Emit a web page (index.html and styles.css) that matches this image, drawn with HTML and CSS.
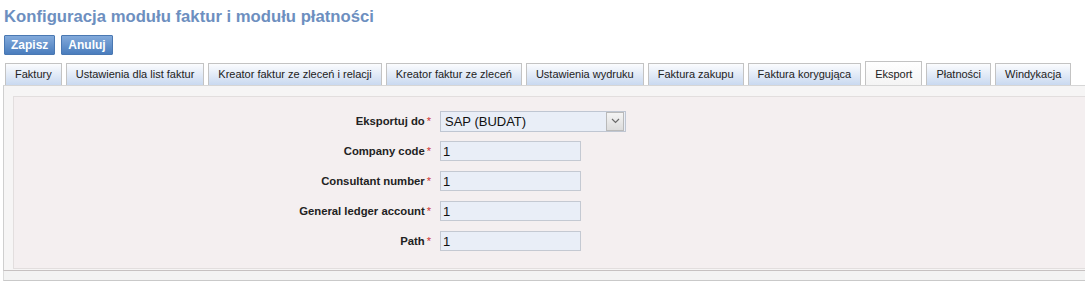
FILE: index.html
```html
<!DOCTYPE html>
<html lang="pl">

<head>
    <meta charset="UTF-8" />
    <title>Konfiguracja modułu faktur</title>
    <link rel="stylesheet" href="styles.css">
</head>

<body>
    <h1 class="title">Konfiguracja modułu faktur i modułu płatności</h1>
    <div class="toolbar">
        <button class="btn">Zapisz</button>
        <button class="btn">Anuluj</button>
    </div>
    <div class="tabs">
        <ul class="tab-list">
            <li class="tab">Faktury</li>
            <li class="tab">Ustawienia dla list faktur</li>
            <li class="tab">Kreator faktur ze zleceń i relacji</li>
            <li class="tab">Kreator faktur ze zleceń</li>
            <li class="tab">Ustawienia wydruku</li>
            <li class="tab">Faktura zakupu</li>
            <li class="tab">Faktura korygująca</li>
            <li class="tab active">Eksport</li>
            <li class="tab">Płatności</li>
            <li class="tab">Windykacja</li>
        </ul>
        <div class="tab-panel">
            <!-- formularz eksportu -->
            <div class="form-box">
                <div class="row">
                    <label>Eksportuj do<span class="req">*</span></label>
                    <div class="select">
                        <span>SAP (BUDAT)</span>
                        <span class="arrow">
                            <svg width="9" height="6" viewBox="0 0 9 6"><path d="M1 1 L4.5 4.5 L8 1" fill="none" stroke="#6a6a6a" stroke-width="1.2"/></svg>
                        </span>
                    </div>
                </div>
                <div class="row">
                    <label>Company code<span class="req">*</span></label>
                    <input type="text" value="1" />
                </div>
                <div class="row">
                    <label>Consultant number<span class="req">*</span></label>
                    <input type="text" value="1" />
                </div>
                <div class="row">
                    <label>General ledger account<span class="req">*</span></label>
                    <input type="text" value="1" />
                </div>
                <div class="row">
                    <label>Path<span class="req">*</span></label>
                    <input type="text" value="1" />
                </div>
            </div>
        </div>
        <div class="tab-footer"></div>
    </div>
</body>

</html>
```

FILE: styles.css
```css
body {
    margin: 0;
    padding: 0;
    background-color: #fff;
    font-family: "Liberation Sans", Arial, sans-serif;
    overflow: hidden;
}

.title {
    margin: 0;
    padding: 7px 0 0 4px;
    height: 24px;
    font-size: 16.7px;
    font-weight: bold;
    color: #6d8fc0;
}

.toolbar {
    display: flex;
    gap: 6px;
    padding: 4px 0 0 4px;
    height: 20px;
}

.btn {
    height: 20px;
    padding: 0 6px;
    border: 1px solid #4a78b2;
    border-radius: 1px;
    background: linear-gradient(#82aadb, #4a7dbd);
    color: #fff;
    font-family: "Liberation Sans", Arial, sans-serif;
    font-size: 12px;
    font-weight: bold;
}

.tabs {
    margin: 6px -30px 0 3px;
}

.tab-list {
    display: flex;
    gap: 4px;
    margin: 0;
    padding: 0 0 0 2px;
    list-style: none;
    align-items: flex-end;
}

.tab {
    height: 21px;
    line-height: 21px;
    padding: 0 9px;
    border: 1px solid #c3c3c3;
    border-bottom: none;
    background: linear-gradient(#fbfcfe, #c9d9f0);
    font-size: 11px;
    color: #222;
}

.tab.active {
    height: 23px;
    line-height: 24px;
    background: linear-gradient(#fff, #f4f4f4);
}

.tab-panel {
    padding: 10px 0 1px 9px;
    border-left: 1px solid #cfcfcf;
    border-top: 1px solid #d6d6d6;
    border-bottom: 1px solid #c6c1c1;
    background-color: #f6f5f5;
}

.form-box {
    padding: 9px 0 12px 0;
    border: 1px solid #e2dede;
    border-right: none;
    background-color: #f4eff0;
}

.row {
    display: flex;
    align-items: center;
    height: 30px;
}

.row label {
    width: 417px;
    margin-right: 9px;
    text-align: right;
    font-size: 11.3px;
    font-weight: bold;
    color: #222;
}

.req {
    margin-left: 2px;
    color: #c33;
    font-weight: normal;
    font-size: 11px;
}

.row input {
    width: 141px;
    height: 20px;
    box-sizing: border-box;
    padding: 0 2px;
    border: 1px solid #c4c9d2;
    background-color: #e9eef7;
    font-family: "Liberation Sans", Arial, sans-serif;
    font-size: 13px;
    color: #111;
    outline: none;
}

.select {
    display: flex;
    align-items: center;
    justify-content: space-between;
    width: 186px;
    height: 21px;
    box-sizing: border-box;
    padding-left: 4px;
    border: 1px solid #bfc6d2;
    background-color: #e9eef7;
    font-size: 13px;
    color: #111;
}

.arrow {
    display: flex;
    align-items: center;
    justify-content: center;
    width: 16px;
    height: 17px;
    margin-right: 1px;
    border: 1px solid #b9b9b9;
    background: linear-gradient(#f4f4f4, #dcdcdc);
}

.tab-footer {
    height: 9px;
    border-bottom: 1px solid #c9c9c9;
    border-left: 1px solid #dcdcdc;
    background-color: #f3f3f3;
}
```
